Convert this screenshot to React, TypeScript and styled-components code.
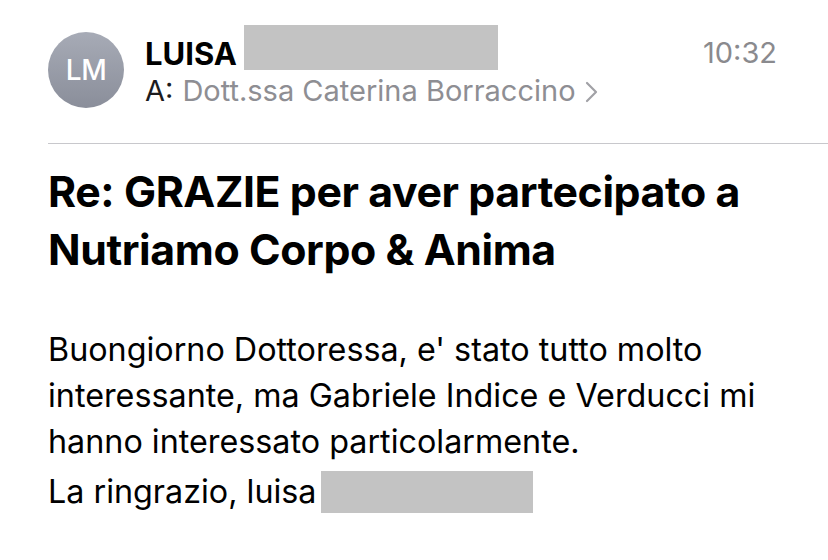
import React from "react";
import styled, { createGlobalStyle } from "styled-components";

const Global = createGlobalStyle`
  html, body { margin: 0; padding: 0; background: #ffffff; }
  body { font-family: Inter, Roboto, "Liberation Sans", sans-serif; -webkit-font-smoothing: antialiased; }
`;

const Page = styled.div`
  width: 828px;
  height: 560px;
  overflow: hidden;
  background: #fff;
`;

const Header = styled.div`
  display: flex;
  align-items: flex-start;
  padding: 25px 51px 0 48px;
  height: 143px;
  box-sizing: border-box;
`;

const Avatar = styled.div`
  width: 76px;
  height: 76px;
  margin-top: 7px;
  border-radius: 50%;
  background: linear-gradient(180deg, #a7abb6 0%, #8a8e9a 100%);
  color: #fff;
  display: flex;
  align-items: center;
  justify-content: center;
  font-size: 28px;
  font-weight: 500;
  letter-spacing: -0.5px;
  flex-shrink: 0;
`;

const Meta = styled.div`
  flex: 1;
  display: flex;
  flex-direction: column;
  margin-left: 21px;
`;

const NameRow = styled.div`
  display: flex;
  align-items: flex-start;
  height: 45px;
`;

const Name = styled.span`
  font-size: 31px;
  line-height: 45px;
  margin-top: 6px;
  font-weight: 700;
  color: #000;
`;

const Redact = styled.span<{ $w: number; $h: number }>`
  display: inline-block;
  flex-shrink: 0;
  width: ${(p) => p.$w}px;
  height: ${(p) => p.$h}px;
  background: #c3c3c3;
`;

const NameRedact = styled(Redact)`
  margin-left: 7px;
`;

const Time = styled.span`
  font-size: 29px;
  line-height: 36px;
  margin-top: 10px;
  color: #8a8a8e;
`;

const ToRow = styled.div`
  display: flex;
  align-items: center;
  font-size: 29px;
  line-height: 36px;
  margin-top: 3px;
`;

const ToLabel = styled.span`
  color: #1c1c1e;
  margin-right: 9px;
`;

const ToName = styled.span`
  color: #8e8e93;
`;

const Chevron = styled.svg`
  width: 14px;
  height: 22px;
  margin-left: 9px;
  margin-top: 2px;
`;

const Divider = styled.div`
  height: 1px;
  margin-left: 48px;
  background: #c8c8cc;
`;

const Subject = styled.h1`
  margin: 19px 20px 0 48px;
  font-size: 42.8px;
  line-height: 58px;
  font-weight: 700;
  color: #000;
  letter-spacing: -0.4px;
  white-space: nowrap;
`;

const Body = styled.div`
  margin: 48px 20px 0 48px;
  font-size: 32.3px;
  line-height: 46px;
  color: #000;
`;

const Line = styled.div`
  display: flex;
  align-items: center;
  white-space: nowrap;
`;

const SignLine = styled(Line)`
  margin-top: 4px;
`;

const SignRedact = styled(Redact)`
  margin-left: 5px;
`;

export default function App() {
  return (
    <Page>
      <Global />
      <Header>
        <Avatar>LM</Avatar>
        <Meta>
          <NameRow>
            <Name>LUISA</Name>
            <NameRedact $w={254} $h={45} />
          </NameRow>
          <ToRow>
            <ToLabel>A:</ToLabel>
            <ToName>Dott.ssa Caterina Borraccino</ToName>
            <Chevron viewBox="0 0 14 22" fill="none">
              <path d="M2 2 L11 11 L2 20" stroke="#a1a1a6" strokeWidth="2.2" strokeLinecap="round" strokeLinejoin="round" />
            </Chevron>
          </ToRow>
        </Meta>
        <Time>10:32</Time>
      </Header>
      <Divider />
      <Subject>
        Re: GRAZIE per aver partecipato a
        <br />
        Nutriamo Corpo &amp; Anima
      </Subject>
      <Body>
        <Line>Buongiorno Dottoressa, e' stato tutto molto</Line>
        <Line>interessante, ma Gabriele Indice e Verducci mi</Line>
        <Line>hanno interessato particolarmente.</Line>
        <SignLine>
          La ringrazio, luisa
          <SignRedact $w={212} $h={42} />
        </SignLine>
      </Body>
    </Page>
  );
}
